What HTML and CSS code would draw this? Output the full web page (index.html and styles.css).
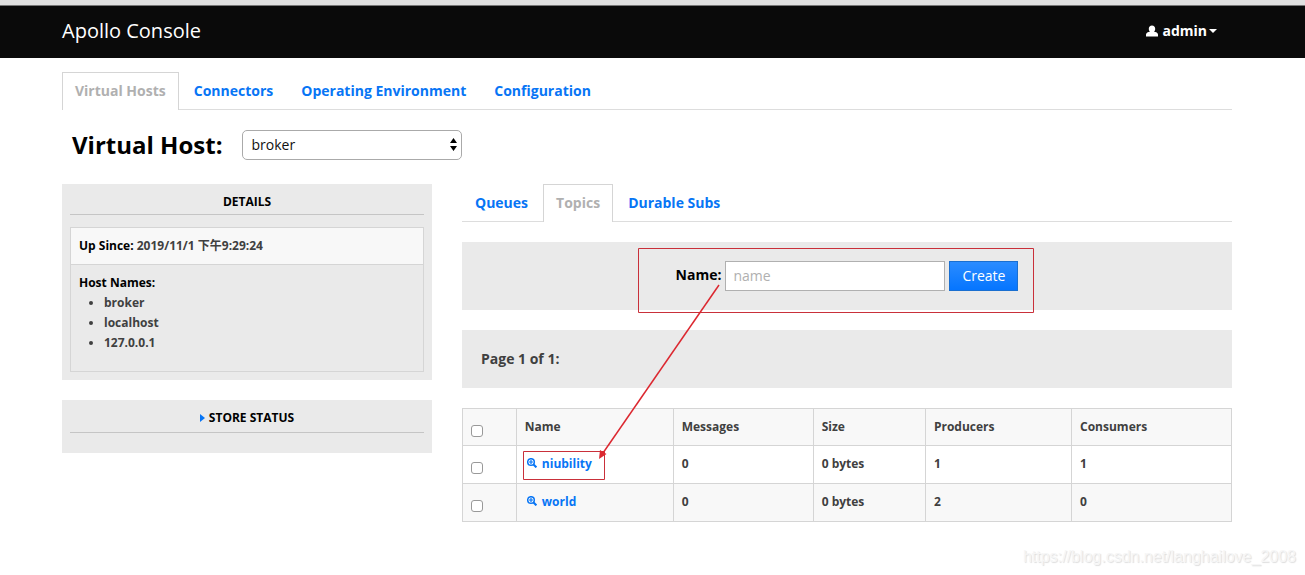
FILE: index.html
```html
<!DOCTYPE html>
<html lang="en">
<head>
<meta charset="utf-8">
<title>Apollo Console</title>
<link rel="stylesheet" href="styles.css">
</head>
<body>
<header class="topbar">
  <span class="brand">Apollo Console</span>
  <button class="user" type="button">
    <svg class="user-icon" width="12" height="12" viewBox="0 0 12 12" aria-hidden="true"><path fill="currentColor" d="M6 0.500C4 0.500 2.800 1.800 2.800 3.700C2.800 5 3.300 6 4 6.700C2 7 0 7.600 0 9.600V11.500H12V9.600C12 7.600 10 7 8 6.700C8.700 6 9.200 5 9.200 3.700C9.200 1.800 8 0.500 6 0.500Z"/></svg>
    <span>admin</span>
    <span class="caret"></span>
  </button>
</header>
<div class="page">
  <nav class="tabs">
    <a class="tab active" href="#hosts">Virtual Hosts</a>
    <a class="tab" href="#connectors">Connectors</a>
    <a class="tab" href="#environment">Operating Environment</a>
    <a class="tab" href="#configuration">Configuration</a>
  </nav>
  <div class="host-row">
    <label class="host-label" for="host">Virtual Host:</label>
    <span class="select-wrap">
      <select class="host-select" id="host"><option>broker</option></select>
      <svg class="select-arrows" width="7" height="13" viewBox="0 0 7 13" aria-hidden="true"><path d="M3.500 0L7 5H0ZM0 8H7L3.500 13Z"/></svg>
    </span>
  </div>
  <div class="columns">
    <aside class="side">
      <section class="panel">
        <h2 class="panel-title">DETAILS</h2>
        <div class="details">
          <div class="detail light"><b class="key">Up Since:</b> 2019/11/1 下午9:29:24</div>
          <div class="detail">
            <b class="key">Host Names:</b>
            <ul class="hosts"><li>broker</li><li>localhost</li><li>127.0.0.1</li></ul>
          </div>
        </div>
      </section>
      <section class="panel store">
        <h2 class="panel-title"><svg class="expand" width="5" height="8" viewBox="0 0 5 8" aria-hidden="true"><path fill="currentColor" d="M0 0L5 4L0 8Z"/></svg>STORE STATUS</h2>
      </section>
    </aside>
    <main class="main">
      <nav class="tabs">
        <a class="tab" href="#queues">Queues</a>
        <a class="tab active" href="#topics">Topics</a>
        <a class="tab" href="#subs">Durable Subs</a>
      </nav>
      <form class="create">
        <label class="name-label" for="name">Name:</label>
        <input class="name-input" id="name" type="text" placeholder="name">
        <button class="create-button" type="button">Create</button>
      </form>
      <div class="pager">Page 1 of 1:</div>
      <table class="topics">
        <colgroup><col class="c-check"><col class="c-name"><col class="c-messages"><col class="c-size"><col class="c-producers"><col class="c-consumers"></colgroup>
        <thead>
          <tr><th><input class="check" type="checkbox" aria-label="Select all"></th><th>Name</th><th>Messages</th><th>Size</th><th>Producers</th><th>Consumers</th></tr>
        </thead>
        <tbody>
          <tr><td><input class="check" type="checkbox" aria-label="Select niubility"></td><td><a class="topic" href="#niubility"><svg class="zoom" width="10" height="10" viewBox="0 0 10 10" aria-hidden="true"><g fill="none" stroke="currentColor"><circle cx="4" cy="4" r="3.300" stroke-width="1.500"/><path d="M2 4H6M4 2V6" stroke-width="1.200"/><path d="M6.300 6.300L9.400 9.400" stroke-width="2"/></g></svg>niubility</a></td><td>0</td><td>0 bytes</td><td>1</td><td>1</td></tr>
          <tr><td><input class="check" type="checkbox" aria-label="Select world"></td><td><a class="topic" href="#world"><svg class="zoom" width="10" height="10" viewBox="0 0 10 10" aria-hidden="true"><g fill="none" stroke="currentColor"><circle cx="4" cy="4" r="3.300" stroke-width="1.500"/><path d="M2 4H6M4 2V6" stroke-width="1.200"/><path d="M6.300 6.300L9.400 9.400" stroke-width="2"/></g></svg>world</a></td><td>0</td><td>0 bytes</td><td>2</td><td>0</td></tr>
        </tbody>
      </table>
      <svg class="marks" width="600" height="300" viewBox="0 0 600 300" aria-hidden="true">
        <g fill="none" stroke="#c9303a"><path d="M176.500 64.500H571.500V128.500H176.500Z"/><path d="M61.500 267.500H142.500V295.500H61.500Z"/></g>
        <path d="M257 101L141 269" stroke="#dc2830" stroke-width="1.500"/><path d="M137 275L138 266L144.500 270Z" fill="#dc2830"/>
      </svg>
    </main>
  </div>
</div>
<div class="watermark">https://blog.csdn.net/langhailove_2008</div>
</body>
</html>
```
FILE: styles.css
```css
* { box-sizing: border-box; }
body {
  margin: 0;
  min-height: 100vh;
  position: relative;
  background: #fff;
  color: #404040;
  font: 14px/20px "Open Sans", "Noto Sans CJK SC", sans-serif;
}
.topbar {
  display: flex;
  align-items: center;
  justify-content: space-between;
  height: 58px;
  padding: 0 88px 2px 62px;
  border-top: 5px solid #e0e0e0;
  background: #0a0a0a;
  box-shadow: inset 0 1px #777;
  color: #fff;
}
.brand { font-size: 20px; }
.user {
  display: flex;
  align-items: center;
  gap: 4px;
  padding: 0;
  border: 0;
  background: none;
  color: #fff;
  font: bold 14px/20px "Open Sans", sans-serif;
}
.caret {
  margin-left: -2px;
  border: 4px solid transparent;
  border-top-color: #fff;
  border-bottom: 0;
}
.page { padding: 14px 73px 0 62px; }
.tabs { display: flex; border-bottom: 1px solid #ddd; }
.tab {
  margin: 0 2px -1px 0;
  padding: 8px 12px;
  border: 1px solid transparent;
  border-bottom: 0;
  height: 38px;
  color: #0775f5;
  font-weight: bold;
  text-decoration: none;
}
.tab.active { border-color: #d5d5d5; background: #fff; color: #b0b0b0; }
.host-row {
  display: flex;
  align-items: center;
  gap: 20px;
  padding: 20px 10px 24px;
}
.host-label { color: #000; font-size: 24px; font-weight: bold; line-height: 30px; }
.select-wrap { position: relative; display: flex; width: 220px; }
.host-select {
  appearance: none;
  width: 100%;
  height: 30px;
  padding: 0 8px;
  border: 1px solid #aaa;
  border-radius: 5px;
  background: #fff;
  color: #111;
  font: 14px/20px "Open Sans", sans-serif;
}
.select-arrows { position: absolute; right: 5px; top: 8px; pointer-events: none; }
.columns { display: flex; gap: 30px; align-items: flex-start; }
.side { flex: 370 1 0; font-size: 12px; font-weight: bold; }
.panel { padding: 8px; margin-bottom: 20px; background: #eaeaea; }
.store { padding-bottom: 20px; }
.panel-title {
  margin: 0;
  padding-bottom: 3px;
  border-bottom: 1px solid #c5c5c5;
  color: #000;
  font-size: 12px;
  line-height: 19px;
  text-align: center;
}
.store .panel-title { padding-bottom: 5px; }
.expand { margin-right: 4px; color: #0775f5; }
.details { margin-top: 12px; border: 1px solid #d5d5d5; }
.detail { padding: 8px; }
.detail.light { border-bottom: 1px solid #d5d5d5; background: #f8f8f8; }
.key { color: #000; font-weight: bold; }
.hosts { margin: 0 0 10px; padding-left: 25px; }
.main { position: relative; flex: 770 1 0; }
.create {
  display: flex;
  justify-content: center;
  align-items: flex-start;
  gap: 4px;
  margin: 20px 0;
  padding: 19px;
  background: #eaeaea;
}
.name-label { padding-top: 4px; color: #000; font-weight: bold; }
.name-input {
  width: 220px;
  height: 30px;
  padding: 0 7px 2px;
  border: 1px solid #b0b0b0;
  background: #fff;
  font: 14px/20px "Open Sans", sans-serif;
}
.name-input::placeholder { color: #b0b0b0; }
.create-button {
  height: 30px;
  padding: 0 12px;
  border: 1px solid #1a6fd0;
  background: linear-gradient(#2b8cff, #0575ff);
  color: #fff;
  font: 14px/20px "Open Sans", sans-serif;
}
.pager { margin-bottom: 20px; padding: 19px; background: #eaeaea; font-weight: bold; }
.topics {
  width: 100%;
  border-collapse: collapse;
  table-layout: fixed;
  font-size: 12px;
  font-weight: bold;
}
.topics th, .topics td {
  height: 38px;
  padding: 8px;
  border: 1px solid #d5d5d5;
  text-align: left;
  vertical-align: top;
}
.topics th { height: 37px; }
.topics th, .topics tbody tr:nth-child(even) { background: #f8f8f8; }
.c-check { width: 7%; }
.c-name { width: 20.4%; }
.c-messages { width: 18.2%; }
.c-size { width: 14.6%; }
.c-producers { width: 19%; }
.check {
  appearance: none;
  display: block;
  width: 12px;
  height: 12px;
  margin: 8px 0 0;
  border: 1px solid #999;
  border-radius: 3px;
  background: #fff;
}
.check:checked { background: #0775f5; }
.topic { color: #0775f5; text-decoration: none; }
.zoom { margin: 0 5px 0 2px; }
.marks { position: absolute; left: 0; top: 0; pointer-events: none; }
.watermark {
  position: absolute;
  right: 9px;
  bottom: 8px;
  color: #f6f6f6;
  font: 16px/20px "Liberation Sans", sans-serif;
  text-shadow: 1px 1px 1px #ddd;
}
```
